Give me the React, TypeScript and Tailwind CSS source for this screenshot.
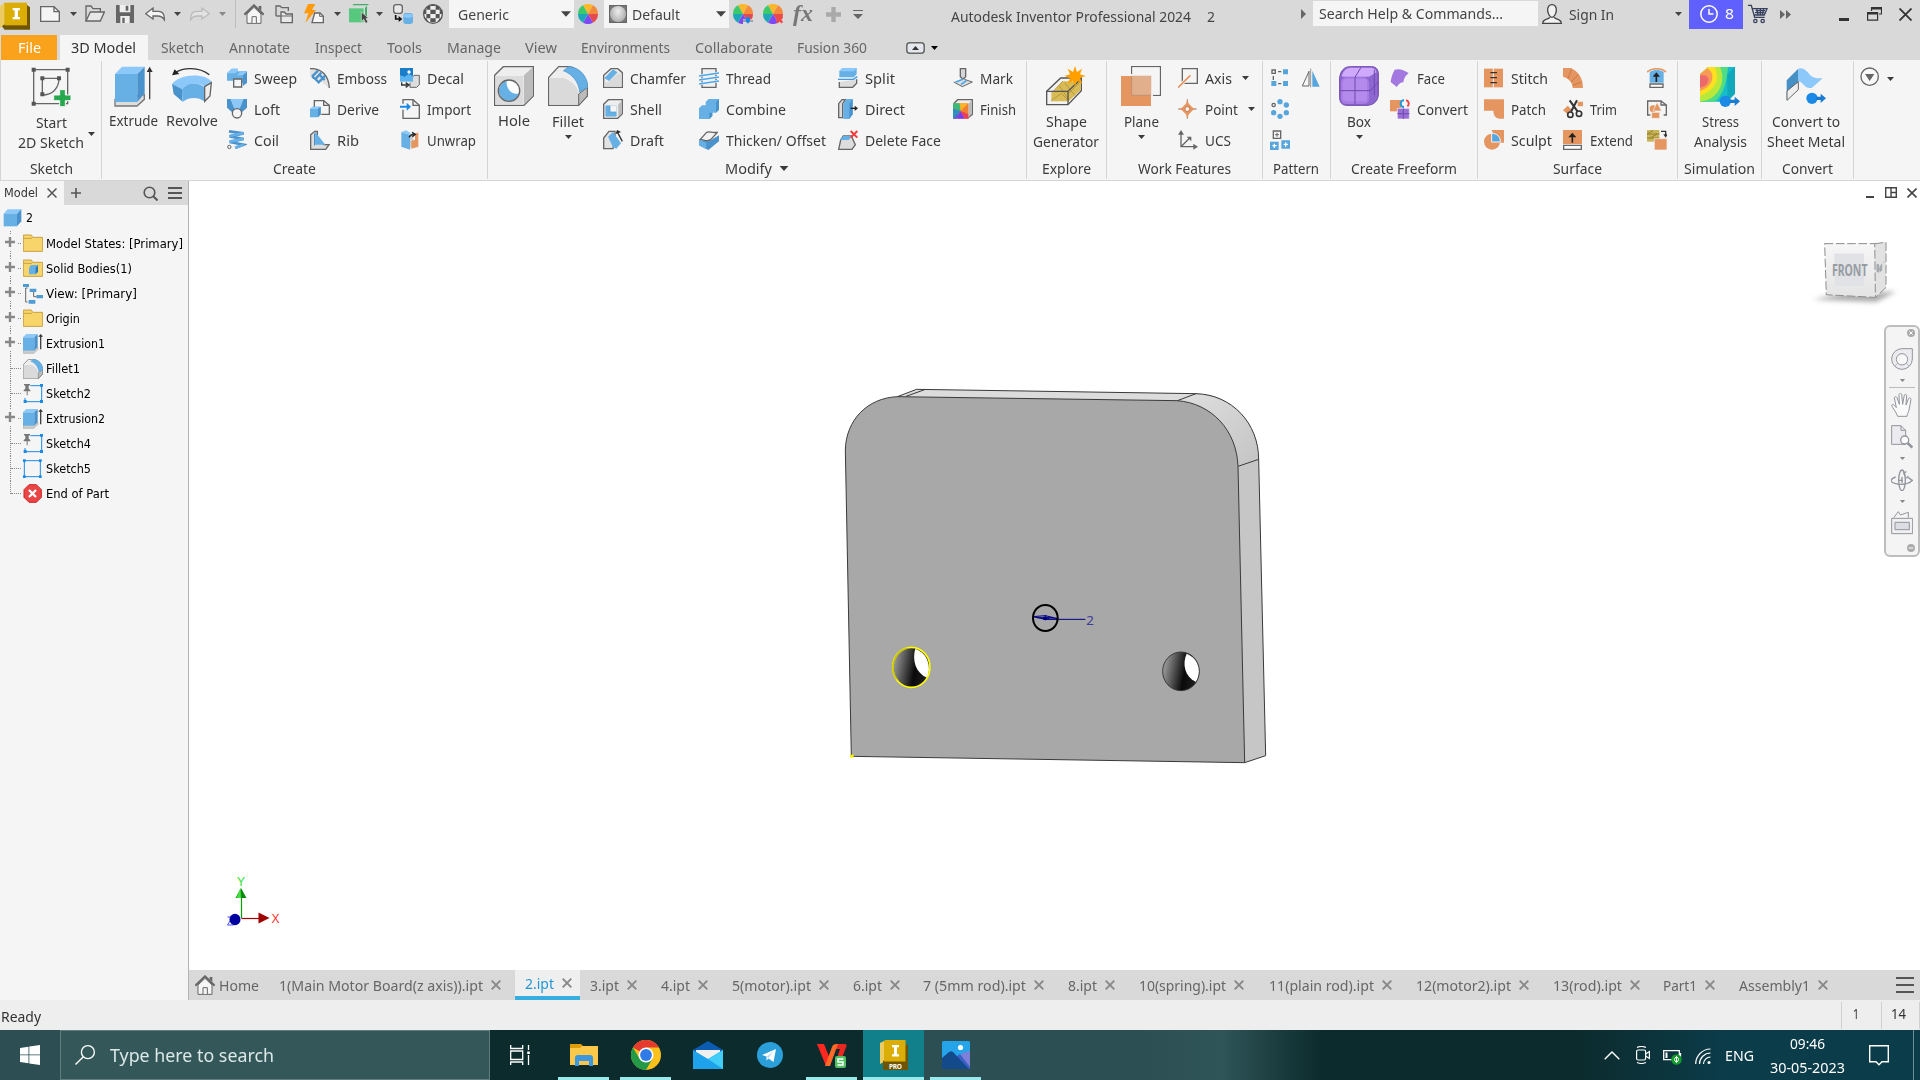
import React, { useLayoutEffect, useRef } from "react";

type Kids = { children?: React.ReactNode };

/* Condenses its text so that it fills the width given by the class. */
function Fit({ className = "", children }: Kids & { className?: string }) {
  const outer = useRef<HTMLSpanElement>(null);
  const inner = useRef<HTMLSpanElement>(null);
  useLayoutEffect(() => {
    const o = outer.current;
    const i = inner.current;
    if (!o || !i) return;
    i.style.transform = "none";
    const k = o.getBoundingClientRect().width / i.getBoundingClientRect().width;
    i.style.transform = `scaleX(${k})`;
  }, [children]);
  return (
    <span ref={outer} className={`block shrink-0 whitespace-nowrap ${className}`}>
      <span ref={inner} className="inline-block origin-left">{children}</span>
    </span>
  );
}

/* Small drawing: 60 units to 20 pixels by default. */
function Ic({ v = "0 0 60 60", className = "h-5 w-5", children }: Kids & { v?: string; className?: string }) {
  return (
    <svg viewBox={v} className={`block shrink-0 ${className}`} fill="none" stroke="none">
      {children}
    </svg>
  );
}

function Down({ className = "" }: { className?: string }) {
  return (
    <svg viewBox="0 0 14 8" className={`block h-1 w-[7px] shrink-0 ${className}`}>
      <path d="M0 0h14L7 8z" fill="currentColor" />
    </svg>
  );
}

const G = "#666";
const B1 = "#8cc8fa";
const B2 = "#66b0e6";
const B3 = "#4a92cc";
const OR = "#e59560";

function Wheel({ mark }: { mark?: "down" | "x" }) {
  return (
    <Ic>
      <path d="M30 30L15 4A30 30 0 0 1 45 4z" fill="#fcb72c" />
      <path d="M30 30L45 4A30 30 0 0 1 60 30z" fill="#f48a3c" />
      <path d="M30 30H60A30 30 0 0 1 45 56z" fill="#e54a50" />
      <path d="M30 30L45 56A30 30 0 0 1 15 56z" fill="#7f48f5" />
      <path d="M30 30L15 56A30 30 0 0 1 0 30z" fill="#1ea7b6" />
      <path d="M30 30H0A30 30 0 0 1 15 4z" fill="#3cc96c" />
      {mark === "down" && (
        <>
          <path d="M30 46h30v14H30z" fill="#d9d9d9" />
          <path d="M30 51h8M52 51h8" stroke={G} strokeWidth="3" />
          <path d="M38 40h13v12l-6 7-7-7z" fill="#1b84e0" />
        </>
      )}
      {mark === "x" && <path d="M41 38l17 18M58 38L41 56" stroke="#f04848" strokeWidth="7" />}
    </Ic>
  );
}

function HomeIcon() {
  return (
    <Ic>
      <path d="M9 30L30 10l21 20v28H9z" fill="#f5f5f5" stroke={G} strokeWidth="3" />
      <path d="M1 32L30 4l29 28" stroke={G} strokeWidth="6" />
      <path d="M44 6h8v14l-8-7z" fill={G} />
      <path d="M24 57V38h13v19" fill="#f5f5f5" stroke={G} strokeWidth="3" />
    </Ic>
  );
}

function TitleBar() {
  return (
    <div className="mb-[2px] flex h-7 items-center text-[#444] [&>*]:shrink-0">
      <Ic v="0 0 93 90" className="h-[30px] w-[31px] self-start">
        <path d="M0 18L14 8v68L0 84z" fill="#ebcb62" />
        <path d="M80 14l10 8v67H14l-8-10z" fill="#6f5500" />
        <path d="M13 8h68v68H13z" fill="#dcae05" />
        <path d="M38 24h22v7h-6v20h6v7H38v-7h6V31h-6z" fill="#fff" />
      </Ic>
      <Ic className="ml-[9px] h-5 w-5">
        <path d="M2 8h40l16 15v29H2z" fill="#f5f5f5" stroke={G} strokeWidth="4" />
        <path d="M42 8v15h16" stroke={G} strokeWidth="4" />
      </Ic>
      <Down className="ml-[10px]" />
      <Ic className="ml-2 h-5 w-5">
        <path d="M3 51V6h15l6 8h22v9" stroke={G} strokeWidth="4" />
        <path d="M16 24h42L46 51H3z" fill="#e8e8e8" stroke={G} strokeWidth="4" />
      </Ic>
      <Ic v="0 0 54 54" className="ml-[11px] h-[18px] w-[18px]">
        <path d="M0 0h54v54H0z" fill={G} />
        <path d="M11 0h32v22H11zM13 33h28v21H13z" fill="#f0f0f0" />
        <path d="M29 2h8v15h-8zM19 38h7v16h-7zM11 27h32v3H11z" fill={G} />
      </Ic>
      <Ic className="ml-[11px] h-5 w-5">
        <path d="M2 29L24 12v10h17c12 0 17 8 17 22v3C52 37 46 36 38 36H24v9z" fill="#f5f5f5" stroke={G} strokeWidth="4" />
      </Ic>
      <Down className="ml-[9px]" />
      <Ic className="ml-[9px] h-5 w-5">
        <path d="M58 29L36 12v10H19C7 22 2 30 2 44v3c6-10 12-11 20-11h14v9z" fill="#e3e3e3" stroke="#bbb" strokeWidth="4" />
      </Ic>
      <Down className="ml-[9px] text-[#888]" />
      <div className="ml-[9px] h-7 w-px self-start bg-[#bdbdbd]" />
      <div className="ml-2"><HomeIcon /></div>
      <Ic v="0 0 54 60" className="ml-[11px] h-5 w-[18px]">
        <path d="M3 36V6h12l5 5h20v10" stroke={G} strokeWidth="4" />
        <path d="M3 36h14" stroke={G} strokeWidth="4" />
        <path d="M18 56V24h10l5 6h19v26z" fill="#e8e8e8" stroke={G} strokeWidth="4" />
        <path d="M18 36h34" stroke={G} strokeWidth="3" />
      </Ic>
      <Ic className="ml-[11px] h-5 w-5">
        <path d="M12 0h22L24 18h12L4 56l9-28H0z" fill="#ff9a0a" />
        <path d="M24 56l8-29h16l10 10v19z" fill="#f5f5f5" stroke={G} strokeWidth="4" />
        <path d="M47 27v10h11" stroke={G} strokeWidth="3" />
      </Ic>
      <Down className="ml-[10px]" />
      <Ic className="ml-2 h-5 w-5">
        <path d="M14 0h46l-4 4H10zM54 5v38l-6 6V12z" fill="#3fae68" />
        <path d="M0 13h44v42H0z" fill="#57c97f" />
        <path d="M37 24v28l7-6 6 12 7-3-6-12h8z" fill="#444" stroke="#ddd" strokeWidth="2" />
      </Ic>
      <Down className="ml-[7px]" />
      <Ic className="ml-[10px] h-5 w-5">
        <rect x="2" y="2" width="26" height="26" rx="8" fill="#e8e8e8" stroke={G} strokeWidth="4" />
        <rect x="31" y="27" width="29" height="33" rx="8" fill={B2} />
        <path d="M31 35c0-8 29-8 29 0s-29 8-29 0" fill={B1} />
        <path d="M8 33v12h12" stroke="#111" strokeWidth="5" />
        <path d="M17 36l11 9-11 9z" fill="#111" />
      </Ic>
      <Ic className="ml-[10px] h-5 w-5">
        <circle cx="30" cy="30" r="28" fill="#eee" stroke="#555" strokeWidth="4" />
        <path d="M12 6h10v11H10zM38 6h10l3 11H38zM22 17h16v13H22zM2 17h8v13H1zM50 17h8l1 13h-9zM10 30h12v13H10zM38 30h12v13H38zM22 43h16v12H22zM4 43h6l6 10h-4zM50 43h6l-8 10h-4zM24 2h12v4H24z" fill="#555" />
      </Ic>
      <div className="ml-[6px] flex h-7 w-[125px] items-center self-start bg-[#f5f5f5]">
        <Fit className="ml-[9px] w-[51px]">Generic</Fit>
        <Down className="ml-[52px] h-[6px] w-[10px]" />
      </div>
      <div className="ml-1"><Wheel /></div>
      <div className="ml-[6px] flex h-7 w-[125px] items-center self-start bg-[#f5f5f5]">
        <div className="ml-[5px] h-[18px] w-[18px] border border-[#666] bg-[#777]">
          <div className="h-4 w-4 rounded-full bg-radial-[at_50%_35%] from-[#eee] to-[#999]" />
        </div>
        <Fit className="ml-[5px] w-12">Default</Fit>
        <Down className="ml-[36px] h-[6px] w-[10px]" />
      </div>
      <div className="ml-1"><Wheel mark="down" /></div>
      <div className="ml-[10px]"><Wheel mark="x" /></div>
      <div className="ml-[10px] w-5 text-center font-['Liberation_Serif',serif] text-[23px] leading-5 font-bold text-[#777] italic">
        <Fit className="w-5">fx</Fit>
      </div>
      <Ic v="0 0 45 45" className="ml-[13px] h-[15px] w-[15px]">
        <path d="M16 0h13v16h16v13H29v16H16V29H0V16h16z" fill="#aaa" />
      </Ic>
      <Ic v="0 0 30 27" className="ml-3 h-[9px] w-[10px]">
        <path d="M0 0h30v3H0zM0 12h30L15 27z" fill={G} />
      </Ic>
      <Fit className="mt-[3px] ml-[88px] w-[240px]">Autodesk Inventor Professional 2024</Fit>
      <Fit className="mt-[3px] ml-4 w-2">2</Fit>
      <Ic v="0 0 5 10" className="ml-[86px] h-[10px] w-[5px]">
        <path d="M0 0l5 5-5 5z" fill={G} />
      </Ic>
      <div className="mt-px ml-[7px] flex h-[25px] w-[225px] items-center self-start bg-[#f5f5f5] pb-[2px]">
        <Fit className="ml-[6px] w-[184px]">Search Help &amp; Commands...</Fit>
      </div>
      <Ic className="ml-1 h-5 w-5">
        <path d="M24 40c-2 6-22 4-22 18h56c0-14-20-12-22-18" fill="#f2f2f2" stroke="#444" strokeWidth="4" />
        <path d="M30 2c-9 0-14 8-13 18s7 20 13 20 12-10 13-20S39 2 30 2z" fill="#f2f2f2" stroke="#444" strokeWidth="4" />
      </Ic>
      <Fit className="ml-[7px] w-[45px]">Sign In</Fit>
      <Down className="ml-[61px]" />
      <div className="ml-[7px] flex h-[29px] w-[54px] items-center self-start bg-[#6060ff] pb-px text-white">
        <svg viewBox="0 0 18 18" className="ml-[11px] h-[18px] w-[18px]" fill="none" stroke="#fff" strokeWidth="1.500">
          <circle cx="9" cy="9" r="8.2" />
          <path d="M9 4v5h4.500" />
        </svg>
        <Fit className="ml-[7px] w-[9px] text-[14px]">8</Fit>
      </div>
      <Ic className="ml-[5px] h-5 w-5">
        <path d="M0 4h10l10 36h30M13 14h44l-8 19H19M23 20h28M21 26h28M26 14l4 19M37 14v19M47 14l-4 19" stroke="#36405e" strokeWidth="4" />
        <circle cx="22" cy="51" r="5" stroke="#36405e" strokeWidth="4" />
        <circle cx="44" cy="51" r="5" stroke="#36405e" strokeWidth="4" />
      </Ic>
      <Ic v="0 0 11 9" className="ml-3 h-[9px] w-[11px]">
        <path d="M0 0l5 4.500-5 4.500zM6 0l5 4.500-5 4.500z" fill={G} />
      </Ic>
      <div className="mt-[11px] ml-[48px] h-[3px] w-[10px] bg-[#333]" />
      <Ic v="0 0 15 14" className="ml-[18px] h-[14px] w-[15px]">
        <path d="M4.500 4V1h10v6H12" stroke="#333" strokeWidth="1.200" />
        <path d="M4 0h11v2.500H4zM0 5h11v2.500H0z" fill="#333" />
        <path d="M.6 5.600h10v7.500H.6z" stroke="#333" strokeWidth="1.200" />
      </Ic>
      <Ic v="0 0 13 13" className="mt-px ml-[17px] h-[13px] w-[13px]">
        <path d="M.5.5l12 12M12.500.5l-12 12" stroke="#333" strokeWidth="1.800" />
      </Ic>
    </div>
  );
}

function MenuTabs() {
  return (
    <div className="mt-[5px] flex h-[25px] items-center text-[#666] [&>span]:-mt-[2px]">
      <div className="ml-px flex h-full w-14 items-center bg-[#faa21b] pb-[2px] text-white">
        <Fit className="ml-[17px] w-[23px]">File</Fit>
      </div>
      <div className="ml-[3px] flex h-full w-[88px] items-center bg-[#f5f5f5] pb-[2px] text-[#333]">
        <Fit className="ml-[11px] w-[65px]">3D Model</Fit>
      </div>
      <Fit className="ml-[13px] w-[43px]">Sketch</Fit>
      <Fit className="ml-[25px] w-[61px]">Annotate</Fit>
      <Fit className="ml-[25px] w-[47px]">Inspect</Fit>
      <Fit className="ml-[25px] w-[35px]">Tools</Fit>
      <Fit className="ml-[25px] w-[54px]">Manage</Fit>
      <Fit className="ml-[24px] w-[32px]">View</Fit>
      <Fit className="ml-[24px] w-[89px]">Environments</Fit>
      <Fit className="ml-[25px] w-[78px]">Collaborate</Fit>
      <Fit className="ml-[24px] w-[70px]">Fusion 360</Fit>
      <Ic v="0 0 19 12" className="ml-[39px] h-3 w-[19px]">
        <rect x=".8" y=".8" width="17.400" height="10.400" rx="3" fill="#e4e8ec" stroke="#666" strokeWidth="1.500" />
        <path d="M6 8l3.500-4L13 8z" fill="#333" />
      </Ic>
      <Down className="ml-[6px] text-black" />
    </div>
  );
}

function Panel({ width, title, children }: Kids & { width: string; title?: React.ReactNode }) {
  return (
    <section className={`mt-px flex h-[118px] shrink-0 flex-col border-r border-[#d4d4d4] ${width}`}>
      <div className="-mt-px flex h-[98px] items-start">{children}</div>
      <div className="flex h-5 items-center justify-center">{title}</div>
    </section>
  );
}

function Big({ width, icon, children }: Kids & { width: string; icon: React.ReactNode }) {
  return (
    <div className={`flex shrink-0 flex-col items-center ${width}`}>
      <div className="flex h-[50px] items-start pt-[6px]">{icon}</div>
      {children}
    </div>
  );
}

function Col({ className = "", children }: Kids & { className?: string }) {
  return <div className={`mt-[2px] flex shrink-0 flex-col ${className}`}>{children}</div>;
}

function Item({ icon, w, arrow, children }: Kids & { icon: React.ReactNode; w?: string; arrow?: string }) {
  return (
    <div className="flex h-[31px] items-center">
      {icon}
      {w && <Fit className={`ml-[7px] ${w}`}>{children}</Fit>}
      {arrow && <Down className={arrow} />}
    </div>
  );
}

function Extrude({ className = "h-[42px] w-10" }: { className?: string }) {
  return (
    <Ic v="0 0 120 126" className={className}>
      <path d="M3 100v20h66l22-20V86z" fill="#ddd" stroke="#777" strokeWidth="4" />
      <path d="M3 24L24 2h68L70 24z" fill={B1} />
      <path d="M3 24h67v84H3z" fill={B2} />
      <path d="M70 24L92 2v80l-22 26z" fill={B3} />
      <path d="M107 100V10" stroke="#444" strokeWidth="4" />
      <path d="M98 18l9-16 9 16z" fill="#333" />
    </Ic>
  );
}

function Fillet({ className = "h-10 w-10" }: { className?: string }) {
  return (
    <Ic v="0 0 120 120" className={className}>
      <path d="M2 34L32 2h30c30 4 56 34 56 66v22L92 118H2z" fill="#eee" stroke={G} strokeWidth="4" />
      <path d="M4 36h43c24 8 44 28 45 50v30H4z" fill="#dadada" />
      <path d="M92 84l26-20v26l-26 28z" fill="#bbb" stroke={G} strokeWidth="3" />
      <path d="M46 14L62 2c32 2 56 26 58 62L95 78C92 46 72 24 46 14z" fill={B2} stroke={B3} strokeWidth="2" />
    </Ic>
  );
}

function RibbonCreate() {
  return (
    <Panel width="w-[386px]" title={<Fit className="w-[43px]">Create</Fit>}>
      <Big width="w-[63px]" icon={<Extrude className="h-[42px] w-10" />}>
        <Fit className="w-[49px]">Extrude</Fit>
      </Big>
      <Big
        width="w-[54px]"
        icon={
          <Ic v="0 0 120 120" className="h-10 w-10">
            <path d="M10 20C34 4 80 2 112 26" stroke="#333" strokeWidth="4" />
            <path d="M0 28L8 10l14 14z" fill="#222" />
            <path d="M0 54C20 24 98 18 120 48L97 62C80 48 44 48 30 72z" fill={B1} />
            <path d="M0 54l30 16v36L5 84z" fill={B3} />
            <path d="M30 72c14-24 50-24 67-8v42c-20-16-50-12-66 2z" fill={B2} />
            <path d="M98 62l20-12-4 40-16 16z" fill="#eee" stroke={G} strokeWidth="4" />
          </Ic>
        }
      >
        <Fit className="w-[52px]">Revolve</Fit>
      </Big>
      <Col className="ml-2 w-[83px]">
        <Item w="w-[43px]" icon={
          <Ic>
            <path d="M0 16L14 2h18v8h28v36H32V38H0z" fill={B2} />
            <path d="M0 16L14 2h18v8l-8 6zM30 22l10-11h20l-8 11z" fill={B1} />
            <path d="M48 22L60 11v33L48 54z" fill={B3} />
            <path d="M20 33h24v24H20z" fill="#f5f5f5" stroke={G} strokeWidth="4" />
          </Ic>
        }>Sweep</Item>
        <Item w="w-[26px]" icon={
          <Ic>
            <path d="M0 0h60v26L42 42H18L0 26z" fill={B3} />
            <path d="M10 0h40L38 30H22z" fill={B1} />
            <circle cx="30" cy="43" r="14" fill="#f5f5f5" stroke={G} strokeWidth="4" />
          </Ic>
        }>Loft</Item>
        <Item w="w-[25px]" icon={
          <Ic>
            <path d="M6 4l44 6-42 9 42 8-42 9 42 8-24 9" stroke={B3} strokeWidth="8" />
            <path d="M50 9L8 18M50 26L8 35M50 44l-26 9" stroke={B2} strokeWidth="8" />
            <circle cx="7" cy="51" r="5" fill="#f5f5f5" stroke={G} strokeWidth="3" />
          </Ic>
        }>Coil</Item>
      </Col>
      <Col className="w-[90px]">
        <Item w="w-[50px]" icon={
          <Ic>
            <path d="M0 2c34-2 56 20 58 58L30 38 0 24z" fill="#e2e2e2" />
            <path d="M0 2c34-2 56 20 58 58" stroke={G} strokeWidth="4" />
            <path d="M6 26L24 8M6 26l10 7L34 14M16 33l10 10 20-20M26 18l18 18" stroke={B3} strokeWidth="7" />
          </Ic>
        }>Emboss</Item>
        <Item w="w-[42px]" icon={
          <Ic>
            <path d="M13 24V5h28l17 14v27H34" fill="#f5f5f5" stroke={G} strokeWidth="4" />
            <path d="M41 5v14h17" stroke={G} strokeWidth="4" />
            <path d="M0 30l8-7h24v23l-8 9H0z" fill={B2} />
            <path d="M0 30l8-7h24l-8 7z" fill={B1} />
            <path d="M24 30l8-7v23l-8 9z" fill={B3} />
          </Ic>
        }>Derive</Item>
        <Item w="w-[22px]" icon={
          <Ic>
            <path d="M2 14L14 4h8v24l20 16h15l-10 14H2z" fill="#ddd" stroke={G} strokeWidth="4" />
            <path d="M16 6l30 38H16z" fill={B2} />
            <path d="M16 6v38l-4 4V12z" fill={B3} />
          </Ic>
        }>Rib</Item>
      </Col>
      <Col>
        <Item w="w-[37px]" icon={
          <Ic>
            <path d="M36 30l6-8h16v28l-8 8H30V44" fill="#ddd" stroke={G} strokeWidth="3" />
            <path d="M0 0h39v40H0z" fill="#1b7cc8" />
            <path d="M0 22l14 4 12-8 13 6v16H0z" fill="#5ab4f0" />
            <circle cx="27" cy="12" r="5" fill="#fff" />
            <path d="M5 43v8h18M17 44l10 7-10 7" stroke="#333" strokeWidth="4" />
          </Ic>
        }>Decal</Item>
        <Item w="w-[44px]" icon={
          <Ic>
            <path d="M9 14V2h30l19 17v39H9V32" fill="#f5f5f5" stroke={G} strokeWidth="4" />
            <path d="M39 2v17h19" stroke={G} strokeWidth="4" />
            <path d="M0 20h20v-9l13 12-13 12v-9H0z" fill="#1b8ae6" />
          </Ic>
        }>Import</Item>
        <Item w="w-[49px]" icon={
          <Ic>
            <path d="M4 6l26 8v45L4 50z" fill={B2} />
            <path d="M4 6l14-5 14 8-2 5z" fill={B1} />
            <path d="M30 14l10-5v20L30 59z" fill="#ccc" />
            <path d="M34 56V34l8-4h3V12l10-5v43z" fill={OR} />
            <path d="M27 22c4-8 8-9 14-9M36 7l10 6-9 7" stroke="#222" strokeWidth="4" />
          </Ic>
        }>Unwrap</Item>
      </Col>
    </Panel>
  );
}

function RibbonModify() {
  return (
    <Panel
      width="w-[539px]"
      title={<><Fit className="w-[47px]">Modify</Fit><Down className="ml-[7px] h-[5px] w-[10px]" /></>}
    >
      <Big width="w-[52px]" icon={
        <Ic v="0 0 120 120" className="h-10 w-10">
          <path d="M2 28L28 2h90v88l-28 28H2z" fill="#eee" stroke={G} strokeWidth="4" />
          <path d="M4 30h84v86H4z" fill="#dcdcdc" />
          <path d="M90 28l26-24v86l-26 26z" fill="#bcbcbc" />
          <circle cx="45" cy="74" r="31" fill="#fff" />
          <path d="M38 44a31 31 0 1 0 38 38C54 90 34 66 38 44z" fill={B2} />
          <circle cx="45" cy="74" r="32" stroke={G} strokeWidth="4" />
        </Ic>
      }>
        <Fit className="w-[32px]">Hole</Fit>
      </Big>
      <Big width="w-[56px]" icon={<Fillet />}>
        <Fit className="mt-px w-[32px]">Fillet</Fit>
        <Down className="mt-1" />
      </Big>
      <Col className="ml-[7px] w-[96px]">
        <Item w="w-[56px]" icon={
          <Ic>
            <path d="M2 36V22L24 2h20l14 12v44H2z" fill="#eee" stroke={G} strokeWidth="4" />
            <path d="M4 40l10 4 26-24 16-6v42H4z" fill="#dadada" />
            <path d="M4 30L30 4l14 9-26 26z" fill={B2} />
          </Ic>
        }>Chamfer</Item>
        <Item w="w-[32px]" icon={
          <Ic>
            <path d="M2 16L16 2h42v42L44 58H2z" fill="#eee" stroke={G} strokeWidth="4" />
            <path d="M46 16L56 6v36L46 54z" fill="#bbb" />
            <path d="M8 20h32v32H8z" fill={B3} />
            <path d="M22 20h18v18H22z" fill="#f5f5f5" />
            <path d="M8 20v32l12-12V20zM20 40h20v12H8z" fill={B2} />
          </Ic>
        }>Shell</Item>
        <Item w="w-[34px]" icon={
          <Ic>
            <path d="M2 24L18 4h18v18L30 56H2z" fill="#e2e2e2" stroke={G} strokeWidth="4" />
            <path d="M15 20L30 6l24 34-14 16-10-4z" fill={B2} />
            <path d="M58 34L44 8" stroke="#333" strokeWidth="4" />
            <path d="M38 12l4-12 12 6z" fill="#222" />
          </Ic>
        }>Draft</Item>
      </Col>
      <Col className="w-[139px]">
        <Item w="w-[45px]" icon={
          <Ic>
            <path d="M9 2h42v56H9z" fill="#f0f0f0" stroke={G} strokeWidth="4" />
            <path d="M0 24l60-9M0 36l60-9M0 48l60-9" stroke="#f5f5f5" strokeWidth="8" />
            <path d="M0 24l60-9M0 36l60-9M0 48l60-9" stroke="#4aa6ec" strokeWidth="4" />
          </Ic>
        }>Thread</Item>
        <Item w="w-[60px]" icon={
          <Ic>
            <path d="M0 28l9-9h11V9l9-9h31v32l-9 9H40v10l-9 9H0z" fill={B2} />
            <path d="M60 0v32l-9 9V10zM40 41v10l-9 9V41z" fill={B3} />
          </Ic>
        }>Combine</Item>
        <Item w="w-[100px]" icon={
          <Ic>
            <path d="M0 30L30 34 60 16v18L28 60 0 46z" fill={B3} />
            <path d="M0 30l22 8v20L0 46z" fill={B2} />
            <path d="M4 28L22 8c8-8 18 4 34-2L36 28C26 38 14 28 4 28z" fill="#f2f2f2" stroke={G} strokeWidth="4" />
          </Ic>
        }>Thicken/ Offset</Item>
      </Col>
      <Col className="w-[115px]">
        <Item w="w-[30px]" icon={
          <Ic>
            <path d="M4 10l9-10h43v18l-8 10H4z" fill={B2} />
            <path d="M4 10l9-10h43l-8 10z" fill={B1} />
            <path d="M4 42v16h40l12-12V34" fill="#ddd" stroke={G} strokeWidth="4" />
            <path d="M0 34h46l12-8" stroke="#3f9ce4" strokeWidth="4" />
          </Ic>
        }>Split</Item>
        <Item w="w-[40px]" icon={
          <Ic>
            <path d="M2 56V14L12 2h10L14 14v42z" fill="#ddd" stroke={G} strokeWidth="4" />
            <path d="M16 14L26 0h18v46L34 60H16z" fill={B2} />
            <path d="M34 14L44 0v46L34 60z" fill={B3} />
            <path d="M38 28h14" stroke="#222" strokeWidth="4" />
            <path d="M50 20l10 8-10 8z" fill="#222" />
          </Ic>
        }>Direct</Item>
        <Item w="w-[76px]" icon={
          <Ic>
            <path d="M2 58l6-28 8-12h24l12 26-10 14z" fill="#ddd" stroke={G} strokeWidth="4" />
            <path d="M6 30l10-12h26L32 30z" fill={B2} />
            <path d="M38 3l20 20M58 3L38 23" stroke="#f03c3c" strokeWidth="6" />
          </Ic>
        }>Delete Face</Item>
      </Col>
      <Col>
        <Item w="w-[33px]" icon={
          <Ic>
            <path d="M22 2h16v24l-8 8-8-8z" fill="#d5d5d5" stroke={G} strokeWidth="4" />
            <path d="M2 42l26 14 30-14-24-8" fill="#ddd" stroke={G} strokeWidth="3" />
            <path d="M8 42l22-8M24 50l16-12" stroke="#46a4ea" strokeWidth="5" />
          </Ic>
        }>Mark</Item>
        <Item w="w-[36px]" icon={
          <Ic>
            <path d="M2 14L14 2h44v44L46 56z" fill="#eee" stroke={G} strokeWidth="4" />
            <path d="M46 14L56 4v40L46 56z" fill="#bbb" />
            <path d="M0 13h46v46H0z" fill="#f08030" />
            <path d="M0 13h20l3 23L0 28z" fill="#3cb878" />
            <path d="M20 13h26L23 36z" fill="#fbb32a" />
            <path d="M0 28l23 8L0 59z" fill="#2a90c0" />
            <path d="M23 36L12 59H0z" fill="#4a60e0" />
            <path d="M23 36l12 23H12z" fill="#7a3cf0" />
            <path d="M23 36l23 10v13H35z" fill="#e8405a" />
          </Ic>
        }>Finish</Item>
      </Col>
    </Panel>
  );
}

function RibbonRest() {
  return (
    <>
      <Panel width="w-[80px]" title={<Fit className="-ml-px w-[49px]">Explore</Fit>}>
        <Big width="w-[78px]" icon={
          <Ic v="0 0 120 120" className="h-10 w-10">
            <path d="M2 76L44 36h62v38l-40 42H2z" fill="#f2f2f2" stroke="#555" strokeWidth="4" />
            <path d="M16 84l34-38h54v26l-36 34H16z" fill="#d9bb55" />
            <path d="M16 82l34-36M68 82l34-34M40 60l28 40M16 104l30-22 22 22M56 50l30 38" stroke="#b89a40" strokeWidth="3" />
            <path d="M2 76h64v40M66 76l38-36" stroke="#555" strokeWidth="4" />
            <path d="M87 0l6 18 15-10-6 17 17 5-17 6 7 17-16-9-6 16-6-16-16 9 7-17-17-6 17-5-7-17 16 10z" fill="#ffa000" />
          </Ic>
        }>
          <Fit className="mt-px w-[41px] leading-5">Shape</Fit>
          <Fit className="w-[66px] leading-5">Generator</Fit>
        </Big>
      </Panel>
      <Panel width="w-[156px]" title={<Fit className="w-[93px]">Work Features</Fit>}>
        <Big width="w-[68px]" icon={
          <Ic v="0 0 120 120" className="h-10 w-10">
            <path d="M0 30h90v90H0z" fill={OR} />
            <path d="M32 2h86v86H32z" fill="#dfc4b0" fillOpacity=".55" />
            <path d="M32 24V2h86v86H96" stroke={G} strokeWidth="4" />
            <path d="M32 30v58h58" stroke="#b58a70" strokeWidth="2" />
            <path d="M92 4h24v82H92zM34 4h60v24H34z" fill="#f5f5f5" />
          </Ic>
        }>
          <Fit className="mt-px w-[35px]">Plane</Fit>
          <Down className="mt-1" />
        </Big>
        <Col className="ml-[3px]">
          <Item w="w-[27px]" arrow="ml-[10px]" icon={
            <Ic>
              <path d="M13 2h45v44H13z" stroke={G} strokeWidth="4" />
              <path d="M0 59l37-37" stroke="#f5f5f5" strokeWidth="10" />
              <path d="M0 59l37-37" stroke={OR} strokeWidth="5" />
            </Ic>
          }>Axis</Item>
          <Item w="w-[33px]" arrow="ml-[10px]" icon={
            <Ic>
              <path d="M28 0v60M0 30h56" stroke={G} strokeWidth="2" />
              <path d="M28 10l20 20-20 20L8 30z" fill={OR} />
              <path d="M28 0l4 14h-8zM28 60l4-14h-8zM0 30l14-4v8zM56 30l-14-4v8z" fill={OR} />
              <circle cx="28" cy="30" r="7" fill="#f5f5f5" stroke="#b86b3a" strokeWidth="2" />
            </Ic>
          }>Point</Item>
          <Item w="w-[26px]" icon={
            <Ic>
              <path d="M9 8v42h42M9 50l26-26" stroke={G} strokeWidth="4" />
              <path d="M0 14L9 0l9 14zM46 41l14 9-14 9zM26 20h14v14z" fill={G} />
            </Ic>
          }>UCS</Item>
        </Col>
      </Panel>
      <Panel width="w-[68px]" title={<Fit className="-ml-px w-[46px]">Pattern</Fit>}>
        <Col className="ml-[7px] w-[31px]">
          <Item icon={
            <Ic>
              <path d="M6 6h10v10H6z" stroke={G} strokeWidth="4" />
              <path d="M24 11h10M24 47h10M10 24v12" stroke={G} strokeWidth="4" />
              <path d="M39 4h15v15H39zM4 39h15v15H4zM39 39h15v15H39z" fill="#56a6dd" />
            </Ic>
          } />
          <Item icon={
            <Ic>
              <circle cx="11" cy="18" r="5" stroke={G} strokeWidth="4" />
              <g fill="#56a6dd">
                <circle cx="30" cy="8" r="8" /><circle cx="49" cy="18" r="8" /><circle cx="49" cy="41" r="8" />
                <circle cx="30" cy="52" r="8" /><circle cx="11" cy="41" r="8" />
              </g>
            </Ic>
          } />
          <Item icon={
            <Ic>
              <path d="M10 3h22v22H10z" stroke={G} strokeWidth="4" />
              <path d="M0 35h26v25H0zM34 31h26v25H34z" fill="#56a6dd" />
              <path d="M21 8v12M15 14h12" stroke={G} strokeWidth="3" />
              <path d="M13 41v13M7 47h13M47 37v13M41 43h13" stroke="#fff" strokeWidth="4" />
            </Ic>
          } />
        </Col>
        <Col>
          <Item icon={
            <Ic>
              <path d="M4 54L24 10v44z" stroke={G} strokeWidth="3" />
              <path d="M34 8l22 48H34z" fill="#56a6dd" />
              <path d="M29 2v56" stroke={G} strokeWidth="2" />
            </Ic>
          } />
        </Col>
      </Panel>
      <Panel width="w-[147px]" title={<Fit className="w-[106px]">Create Freeform</Fit>}>
        <Big width="w-[56px]" icon={
          <Ic v="0 0 120 120" className="h-10 w-10">
            <path d="M2 36C4 14 16 2 34 2h64c14 0 20 10 20 22v60c0 20-14 34-34 34H24C8 118 2 108 2 94z" fill="#8e66cf" stroke="#6a45a8" strokeWidth="3" />
            <path d="M8 30C14 12 24 5 36 5h58c10 0 18 8 18 14L90 32H12z" fill="#cfa9fb" />
            <rect x="6" y="34" width="84" height="80" rx="16" fill="#a97ce4" />
            <rect x="12" y="38" width="72" height="68" rx="10" fill="#b48aec" />
            <path d="M4 74h90l24-26M48 34v82M48 34L66 4M106 12v76" stroke="#6f4aad" strokeWidth="3" />
          </Ic>
        }>
          <Fit className="mt-px w-[24px]">Box</Fit>
          <Down className="mt-1" />
        </Big>
        <Col className="ml-[3px]">
          <Item w="w-[28px]" icon={
            <Ic>
              <path d="M14 5c14-4 26 0 42 10-14 12-14 20-16 28-8 0-12 4-20 14L2 42C4 26 8 16 14 5z" fill="#a378e0" />
            </Ic>
          }>Face</Item>
          <Item w="w-[51px]" icon={
            <Ic>
              <path d="M0 3h34v34H0z" fill={OR} />
              <path d="M22 28h36v32H22z" fill="#9a6fd8" stroke="#f5f5f5" strokeWidth="2" />
              <path d="M40 28v32M22 44h36" stroke="#6f4aad" strokeWidth="3" />
              <circle cx="46" cy="14" r="13" fill="#f5f5f5" />
              <path d="M48 4a10 10 0 0 1 4 18" stroke="#f04848" strokeWidth="6" />
              <path d="M42 4a10 10 0 0 0 0 20" stroke="#1b9ae6" strokeWidth="6" />
            </Ic>
          }>Convert</Item>
        </Col>
      </Panel>
      <Panel width="w-[200px]" title={<Fit className="w-[49px]">Surface</Fit>}>
        <Col className="ml-[6px] w-[79px]">
          <Item w="w-[37px]" icon={
            <Ic>
              <path d="M0 2h57v56H0z" fill={OR} />
              <path d="M28 2v56" stroke="#f5f5f5" strokeWidth="3" />
              <path d="M19 14h20M19 29h20M19 44h20" stroke="#333" strokeWidth="4" />
            </Ic>
          }>Stitch</Item>
          <Item w="w-[35px]" icon={
            <Ic><path d="M0 1h60v58H47C34 58 28 48 28 35H0z" fill={OR} /></Ic>
          }>Patch</Item>
          <Item w="w-[41px]" icon={
            <Ic>
              <path d="M23 0h37v38H38z" fill={OR} />
              <circle cx="24" cy="35" r="24" fill={OR} />
              <path d="M23 10v26h26C50 20 38 10 23 10z" fill="#56a6e0" stroke="#f5f5f5" strokeWidth="3" />
            </Ic>
          }>Sculpt</Item>
        </Col>
        <Col className="w-[84px]">
          <Item icon={
            <Ic>
              <path d="M0 0h22c22 8 38 28 38 60H29C30 46 18 30 0 26z" fill={OR} />
              <path d="M15 32L26 2M24 42l22-22M29 52l27-10" stroke="#b86b3a" strokeWidth="2" />
            </Ic>
          } />
          <Item w="w-[27px]" icon={
            <Ic>
              <path d="M0 34L14 20l12 12-12 14zM44 8h16v14H44z" fill={OR} />
              <path d="M20 4l24 34M42 4L24 38" stroke="#333" strokeWidth="6" />
              <circle cx="22" cy="47" r="8" stroke="#333" strokeWidth="5" />
              <circle cx="48" cy="44" r="8" stroke="#333" strokeWidth="5" />
            </Ic>
          }>Trim</Item>
          <Item w="w-[43px]" icon={
            <Ic>
              <path d="M0 0h57v42H0z" fill={OR} />
              <path d="M2 46h53v12H2z" fill="#fff" stroke={G} strokeWidth="4" />
              <path d="M28 38V18" stroke="#222" strokeWidth="5" />
              <path d="M16 22L28 8l12 14z" fill="#222" />
            </Ic>
          }>Extend</Item>
        </Col>
        <Col>
          <Item icon={
            <Ic>
              <path d="M8 12c14-8 28-8 42 0v32H8z" fill={B2} />
              <path d="M0 12C16-1 42-1 57 12" stroke={OR} strokeWidth="5" />
              <path d="M9 48h39v10H9z" fill="#fff" stroke={G} strokeWidth="4" />
              <path d="M28 42V22" stroke="#222" strokeWidth="5" />
              <path d="M17 26l11-13 11 13z" fill="#222" />
            </Ic>
          } />
          <Item icon={
            <Ic>
              <path d="M10 48H2V6h40l16 12v30h-8" stroke={G} strokeWidth="4" />
              <path d="M42 6v12h16" stroke={G} strokeWidth="4" />
              <circle cx="18" cy="29" r="10" fill={OR} />
              <path d="M30 10l14 26H18zM14 40h24v18H14z" fill={OR} stroke="#f5f5f5" strokeWidth="2" />
            </Ic>
          } />
          <Item icon={
            <Ic>
              <path d="M0 0h37v35H0z" fill="#c9b458" />
              <path d="M0 12h37M0 24h37M0 12L18 2M10 24l20-12" stroke="#94802e" strokeWidth="3" />
              <path d="M42 4h14v10" stroke="#333" strokeWidth="4" />
              <path d="M49 13h13l-6 10z" fill="#333" />
              <path d="M22 26h38v34H22z" fill={OR} stroke="#f5f5f5" strokeWidth="2" />
            </Ic>
          } />
        </Col>
      </Panel>
      <Panel width="w-[84px]" title={<Fit className="w-[71px]">Simulation</Fit>}>
        <Big width="w-[84px]" icon={
          <Ic v="0 0 120 120" className="mt-px h-10 w-10">
            <path d="M0 22L24 0h81v80l-24 24H0z" fill="#17bccb" />
            <path d="M0 22L24 0h60c-4 40-10 80-40 104H0z" fill="#4fdc84" />
            <path d="M0 22L24 0h36c18 40 0 84-40 100L0 104z" fill="#b9e83a" />
            <path d="M0 22L24 0h20c18 40 0 70-44 86z" fill="#ffe020" />
            <path d="M0 22L22 4c28 18 16 56-22 68z" fill="#f79a55" />
            <path d="M0 26c34-8 34 30 0 36z" fill="#ee6a6a" />
            <path d="M82 22l23-22v80l-23 24z" fill="#0a9cb0" fillOpacity=".6" />
            <circle cx="76" cy="103" r="17" fill="#1b8ae6" />
            <path d="M90 98h14v-9l16 14-16 14v-9H90z" fill="#1b7cd0" />
          </Ic>
        }>
          <Fit className="mt-px w-[37px] leading-5">Stress</Fit>
          <Fit className="w-[53px] leading-5">Analysis</Fit>
        </Big>
      </Panel>
      <Panel width="w-[92px]" title={<Fit className="w-[51px]">Convert</Fit>}>
        <Big width="w-[88px]" icon={
          <Ic v="0 0 120 120" className="mt-px h-10 w-10">
            <path d="M2 40L36 6v42L2 100z" fill="#4690c6" />
            <path d="M36 6C48-2 64 12 72 24c10 10 22 10 38 10L78 62C54 68 50 40 36 44z" fill={B1} />
            <path d="M3 72l34-28v24L3 100z" fill="#eee" stroke={G} strokeWidth="3" />
            <circle cx="78" cy="94" r="17" fill="#1b8ae6" />
            <path d="M90 89h14v-9l16 14-16 14v-9H90z" fill="#1b7cd0" />
          </Ic>
        }>
          <Fit className="mt-px w-[68px] leading-5">Convert to</Fit>
          <Fit className="w-[78px] leading-5">Sheet Metal</Fit>
        </Big>
      </Panel>
      <div className="flex h-[34px] items-center">
        <Ic className="ml-[6px] h-5 w-5">
          <circle cx="29" cy="29" r="26" fill="#f8f8f8" stroke={G} strokeWidth="4" />
          <path d="M15 21h28L29 42z" fill={G} />
        </Ic>
        <Down className="mt-1 ml-[7px]" />
      </div>
    </>
  );
}

function Ribbon() {
  return (
    <div className="flex h-[121px] border-b border-l border-[#d4d4d4] bg-[#f5f5f5] leading-5 text-[#3b3b3b]">
      <Panel width="w-[101px]" title={<Fit className="w-[43px]">Sketch</Fit>}>
        <div className="flex w-full flex-col items-center">
          <div className="flex h-[50px] pt-[7px]">
            <Ic v="0 0 120 120" className="h-10 w-10">
              <path d="M8 8h102v102H8z" stroke={G} strokeWidth="4" />
              <path d="M34 34h50c0 30-20 50-50 50z" stroke={G} strokeWidth="4" />
              <path d="M2 2h12v12H2zM104 2h12v12h-12zM2 104h12v12H2zM28 28h12v12H28zM78 28h12v12H78zM28 76h12v12H28z" fill="#555" />
              <path d="M86 68h17v16h17v17h-17v18H86v-18H68V84h18z" fill="#26a94e" stroke="#f5f5f5" strokeWidth="3" />
            </Ic>
          </div>
          <Fit className="mt-[2px] w-[31px]">Start</Fit>
          <div className="flex w-full items-center">
            <Fit className="ml-[17px] w-[66px]">2D Sketch</Fit>
            <Down className="-mt-4 ml-1" />
          </div>
        </div>
      </Panel>
      <RibbonCreate />
      <RibbonModify />
      <RibbonRest />
    </div>
  );
}

/* ---------- model browser ---------- */

function Folder({ body }: { body?: boolean }) {
  return (
    <Ic>
      <path d="M1 52V3h24l4 7h30v42z" fill="#f8d56a" stroke="#c9a040" strokeWidth="3" />
      <path d="M1 13h26" stroke="#c9a040" strokeWidth="3" />
      {body && (
        <>
          <path d="M18 26l6-8h21v20l-7 8H18z" fill={B2} />
          <path d="M38 26l7-8v20l-7 8z" fill="#2c78b4" />
        </>
      )}
    </Ic>
  );
}

function SketchIcon({ pin }: { pin?: boolean }) {
  return (
    <Ic>
      <path d={pin ? "M22 5h34v48H6V42" : "M4 5h48v48H4z"} stroke="#1b8ae6" strokeWidth="3" />
      {pin ? (
        <>
          <path d="M51 0h9v8h-9zM51 48h9v9h-9zM2 48h9v9H2z" fill="#1b8ae6" />
          <path d="M3 0h18v3l-4 3v8l5 4v4H2v-4l5-4V6L3 3zM11 20h3v14h-3z" fill="#777" />
        </>
      ) : (
        <path d="M0 1h8v8H0zM48 1h8v8h-8zM0 49h8v8H0zM48 49h8v8h-8z" fill="#1b8ae6" />
      )}
    </Ic>
  );
}

const fillet = <Fillet className="h-5 w-5" />;
const extrude = (
  <Ic>
    <path d="M1 46v12h32l12-12v-6z" fill="#ccc" stroke="#aaa" strokeWidth="2" />
    <path d="M0 10L10 0h34L34 10z" fill={B1} />
    <path d="M0 10h34v40H0z" fill={B2} />
    <path d="M34 10L44 0v38L34 50z" fill={B3} />
    <path d="M53 46V4" stroke="#444" strokeWidth="4" />
    <path d="M46 8l7-8 7 8z" fill="#333" />
  </Ic>
);
const viewIcon = (
  <Ic>
    <path d="M14 12H8v42h6M32 22v16h8" stroke={G} strokeWidth="3" />
    <path d="M0 0h18v9H0zM20 14h20v10H20zM40 33h20v10H40zM17 48h20v11H17z" fill="#4f9bd6" />
  </Ic>
);
const endIcon = (
  <Ic>
    <path d="M18 2h22l15 15v23L40 55H18L3 40V17z" fill="#ea4545" stroke="#c22" strokeWidth="3" />
    <path d="M18 18l21 21M39 18L18 39" stroke="#fff" strokeWidth="7" />
  </Ic>
);

const tree: [string, React.ReactNode, string, boolean][] = [
  ["Model States: [Primary]", <Folder key="a" />, "w-[137px]", true],
  ["Solid Bodies(1)", <Folder key="b" body />, "w-[86px]", true],
  ["View: [Primary]", viewIcon, "w-[91px]", true],
  ["Origin", <Folder key="c" />, "w-[34px]", true],
  ["Extrusion1", extrude, "w-[59px]", true],
  ["Fillet1", fillet, "w-[34px]", false],
  ["Sketch2", <SketchIcon key="d" pin />, "w-[45px]", false],
  ["Extrusion2", extrude, "w-[59px]", true],
  ["Sketch4", <SketchIcon key="e" pin />, "w-[45px]", false],
  ["Sketch5", <SketchIcon key="f" />, "w-[45px]", false],
  ["End of Part", endIcon, "w-[63px]", false],
];

function Browser() {
  return (
    <aside className="flex h-full w-[189px] shrink-0 flex-col border-r border-[#b4b4b4] bg-[#f5f5f5] font-['DejaVu_Sans',sans-serif] text-[12.500px] text-black">
      <div className="flex h-6 items-center bg-[#d9d9d9]">
        <div className="flex h-full w-16 items-center bg-[#f5f5f5] text-[#333]">
          <Fit className="ml-1 w-[34px]">Model</Fit>
          <Ic v="0 0 10 10" className="ml-[9px] h-[10px] w-[10px]">
            <path d="M.5.5l9 9M9.500.5l-9 9" stroke="#555" strokeWidth="1.500" />
          </Ic>
        </div>
        <Ic v="0 0 10 10" className="ml-[7px] h-[10px] w-[10px]">
          <path d="M5 0v10M0 5h10" stroke="#555" strokeWidth="1.600" />
        </Ic>
        <Ic v="0 0 15 15" className="ml-[62px] h-[15px] w-[15px]">
          <circle cx="6.500" cy="6.500" r="5.300" stroke="#555" strokeWidth="1.600" />
          <path d="M10.500 10.500l4 4" stroke="#555" strokeWidth="2" />
        </Ic>
        <div className="ml-[10px] flex w-[14px] flex-col gap-[3px] [&>*]:h-[2px] [&>*]:bg-[#555]">
          <div /><div /><div />
        </div>
      </div>
      <div className="flex h-[26px] items-center">
        <Ic className="ml-[3px] h-5 w-5">
          <path d="M2 17L14 4h42L42 17z" fill={B1} />
          <path d="M2 17h40v38H2z" fill={B2} />
          <path d="M42 17L55 4v36L42 55z" fill={B3} />
        </Ic>
        <Fit className="ml-[3px] w-[7px]">2</Fit>
      </div>
      {tree.map(([name, icon, w, plus], i) => (
        <div key={name} className="flex h-[25px] items-center">
          <div className={`ml-[10px] flex w-[11px] self-stretch border-l border-dotted border-[#888] ${i === 10 ? "h-[13px]" : ""}`}>
            <div className="mt-[12px] h-px w-[11px] border-t border-dotted border-[#888]" />
          </div>
          <div className="-ml-[16px] flex h-[10px] w-[10px] items-center justify-center">
            {plus && (
              <Ic v="0 0 16 16" className="-mt-1 h-4 w-4">
                <path d="M3 0h10v16H3zM0 3h16v10H0z" fill="#f5f5f5" />
                <path d="M8 3v10M3 8h10" stroke="#888" strokeWidth="2.400" />
              </Ic>
            )}
          </div>
          <div className="ml-2">{icon}</div>
          <Fit className={`ml-[3px] ${w}`}>{name}</Fit>
        </div>
      ))}
    </aside>
  );
}

/* ---------- graphics window ---------- */

function Part() {
  return (
    <svg viewBox="0 0 1410 1230" className="absolute top-[189px] left-[631px] h-[410px] w-[470px]" fill="none">
      <defs>
        <linearGradient id="bore" x1="0" x2="1" y1=".4" y2=".6">
          <stop offset="0" stopColor="#a0a0a0" />
          <stop offset=".3" stopColor="#555" />
          <stop offset=".6" stopColor="#0a0a0a" />
          <stop offset="1" stopColor="#222" />
        </linearGradient>
        <linearGradient id="round" x1="1120" y1="80" x2="1300" y2="270" gradientUnits="userSpaceOnUse">
          <stop offset="0" stopColor="#dcdcdc" />
          <stop offset="1" stopColor="#c6c6c6" />
        </linearGradient>
      </defs>
      <path d="M232 80L290 58 1140 71C1236 76 1316 160 1316 268L1337 1157 1274 1178z" fill="#c6c6c6" />
      <path d="M232 80L290 58 1128 71 1072 92z" fill="#dcdcdc" />
      <path d="M1072 92L1128 71C1236 74 1316 160 1316 268L1254 289C1250 180 1174 100 1072 92z" fill="url(#round)" />
      <path d="M94 1159L76 240C78 150 142 84 232 80L1072 92C1174 100 1250 180 1254 289L1274 1178z" fill="#a8a8a8" />
      <g stroke="#3a3a3a" strokeWidth="3">
        <path d="M94 1159L76 240C78 150 142 84 232 80L1072 92C1174 100 1250 180 1254 289L1274 1178z" />
        <path d="M232 80L290 58 1128 71C1236 74 1316 160 1316 268L1337 1157 1274 1178M1254 289L1316 268M1072 92L1128 71M258 79L314 59" />
      </g>
      <ellipse cx="274" cy="892" rx="57" ry="60" fill="url(#bore)" />
      <path d="M286 836C324 850 334 890 322 924C286 908 276 870 286 836z" fill="#fff" />
      <ellipse cx="274" cy="892" rx="56" ry="60" stroke="#ff0" strokeWidth="5" />
      <path d="M230 928A56 60 0 0 1 262 834" stroke="#c8c400" strokeWidth="5" />
      <ellipse cx="1083" cy="904" rx="55" ry="58" fill="url(#bore)" />
      <path d="M1100 851C1136 866 1148 902 1128 936C1094 920 1086 882 1100 851z" fill="#fff" />
      <ellipse cx="1083" cy="904" rx="55" ry="58" stroke="#3a3a3a" strokeWidth="3" />
      <path d="M638 740l38-3 38 9-38 2zM650 743h50M676 735v16M664 745h24M676 748h120" stroke="#000080" strokeWidth="3" />
      <path d="M670 740h11v10h-11z" fill="#000080" />
      <ellipse cx="676" cy="744" rx="37" ry="39" stroke="#000" strokeWidth="6" />
      <text x="799" y="765" fontSize="40" fill="#3d3d99" fontFamily="Noto Sans, sans-serif">2</text>
      <path d="M90 1154h11v9H90z" fill="#f5f000" />
    </svg>
  );
}

function ViewCube() {
  return (
    <svg viewBox="80 170 290 220" className="absolute top-[56px] left-[1617px] h-[73px] w-[97px]" fill="none">
      <defs>
        <filter id="soft" x="-20%" y="-50%" width="140%" height="200%"><feGaussianBlur stdDeviation="8" /></filter>
        <linearGradient id="face" x1="0" x2="0" y1="0" y2="1">
          <stop offset="0" stopColor="#f6f6f6" /><stop offset="1" stopColor="#e4e4e4" />
        </linearGradient>
      </defs>
      <path d="M100 358L180 342 350 334 290 366z" fill="#aaa" filter="url(#soft)" />
      <path d="M135 190L286 190 288 352 140 344z" fill="url(#face)" />
      <path d="M286 190L320 186 320 322 288 352z" fill="#e2e2e2" />
      <path d="M164 220h90v98h-88z" fill="#e0e2e5" />
      <path d="M135 190L286 190 288 352 140 344zM286 190L320 186 320 322 288 352" stroke="#8c8c8c" strokeWidth="3" strokeDasharray="26 8" />
      <text x="157" y="287" fontSize="46" fontWeight="700" fill="#979ca3" textLength="107" lengthAdjust="spacingAndGlyphs" fontFamily="Noto Sans, sans-serif">FRONT</text>
      <path d="M293 252l5 2v22l-5-2zM301 264l6-12v18l-5 4zM311 246h3" stroke="#a2a7ae" strokeWidth="3" fill="#a2a7ae" />
    </svg>
  );
}

function NavBar() {
  return (
    <div className="absolute top-[144px] left-[1695px] flex h-[232px] w-9 flex-col items-center rounded-md border-2 border-[#bdbdbd] bg-[#f4f4f4] text-[#888]">
      <Ic v="0 0 24 24" className="mt-[2px] ml-[17px] h-2 w-2">
        <circle cx="12" cy="12" r="12" fill="#aaa" />
        <path d="M7 7l10 10M17 7L7 17" stroke="#fff" strokeWidth="3" />
      </Ic>
      <Ic v="0 0 66 66" className="mt-[11px] h-[22px] w-[22px]">
        <path d="M33 2h31v31a31 31 0 1 1-31-31z" fill="#ececf0" stroke="#92959c" strokeWidth="3" />
        <circle cx="33" cy="34" r="17" fill="#f8f8f8" stroke="#92959c" strokeWidth="3" />
        <path d="M20 46l-8 8M46 46l8 8" stroke="#b5b7bc" strokeWidth="3" />
      </Ic>
      <Down className="mt-[9px] h-[3px] w-[5px]" />
      <div className="mt-[5px] h-px w-[26px] bg-[#bbb]" />
      <Ic v="0 0 66 72" className="mt-[5px] h-6 w-[22px]">
        <path d="M20 70C16 56 4 46 2 36c4-4 8 0 14 8L10 14c2-4 6-4 8 0l7 20-1-30c2-4 7-4 8 0l3 30 5-28c2-3 7-2 7 2l-2 28 8-20c3-3 7-1 7 3l-6 32c-2 8-6 12-6 19z" fill="#fafafa" stroke="#92959c" strokeWidth="3" />
      </Ic>
      <Ic v="0 0 66 72" className="mt-2 h-6 w-[22px]">
        <path d="M2 2h28l14 14v42H2z" fill="#ececf0" stroke="#92959c" strokeWidth="3" />
        <path d="M30 2v14h14" stroke="#92959c" strokeWidth="3" />
        <circle cx="41" cy="45" r="12" fill="#fff" stroke="#92959c" strokeWidth="4" />
        <path d="M50 54l14 14" stroke="#92959c" strokeWidth="8" />
      </Ic>
      <Down className="mt-[8px] h-[3px] w-[5px]" />
      <Ic v="0 0 66 66" className="mt-[9px] h-[22px] w-[22px]">
        <ellipse cx="33" cy="34" rx="10" ry="31" stroke="#92959c" strokeWidth="4" />
        <path d="M14 24C-4 30-4 40 14 44c14 4 34 2 42-4M52 26l12 8-10 8M22 34h14M33 24v18M46 8l-8 4 4 8M52 22l-6 6" stroke="#92959c" strokeWidth="4" />
      </Ic>
      <Down className="mt-[9px] h-[3px] w-[5px]" />
      <Ic v="0 0 66 72" className="mt-[8px] h-6 w-[22px]">
        <path d="M8 20L22 2l6 10L52 4v16" fill="#f5f5f5" stroke="#92959c" strokeWidth="3" />
        <path d="M2 22h63v46H2z" fill="#f0f0f2" stroke="#92959c" strokeWidth="3" />
        <path d="M12 34h43v22H12z" fill="#dcdee4" stroke="#92959c" strokeWidth="3" />
      </Ic>
      <Ic v="0 0 24 24" className="mt-[9px] ml-[17px] h-2 w-2">
        <circle cx="12" cy="12" r="12" fill="#aaa" />
        <path d="M5 12h14" stroke="#fff" strokeWidth="3" />
      </Ic>
    </div>
  );
}

function Triad() {
  return (
    <svg viewBox="220 870 70 70" className="absolute top-[689px] left-[31px] h-[70px] w-[70px]">
      <path d="M241.500 918V890" stroke="#00a000" strokeWidth="1.200" />
      <path d="M241.500 918.500h18" stroke="#a00000" strokeWidth="1.200" />
      <path d="M241 888l5.500 10h-11z" fill="#0b8a0b" />
      <path d="M240.500 888l.5 10h-4.500z" fill="#44e044" />
      <path d="M258.500 912.500l11 5.500-11 5.500z" fill="#a00000" />
      <path d="M227.500 917h5l-5 8h6" stroke="#4a4aff" fill="none" />
      <ellipse cx="235" cy="919.500" rx="5.500" ry="5.800" fill="#0000a0" />
      <text x="237" y="886" fontSize="12" fill="#30e030" fontFamily="Liberation Sans, sans-serif">Y</text>
      <text x="271.500" y="922.500" fontSize="12" fill="#ff3030" fontFamily="Liberation Sans, sans-serif">X</text>
    </svg>
  );
}

function Viewport() {
  return (
    <main className="relative h-[789px] bg-white">
      <div className="flex h-6 items-center justify-end pr-[3px]">
        <div className="mt-2 h-[2px] w-2 bg-[#444]" />
        <Ic v="0 0 12 11" className="-mt-px ml-[11px] h-[11px] w-3">
          <path d="M.7.700h10.600v9.600H.7zM6 .7v9.600M6 5.500h5" stroke="#444" strokeWidth="1.400" />
        </Ic>
        <Ic v="0 0 10 10" className="-mt-px ml-[10px] h-[10px] w-[10px]">
          <path d="M.5.5l9 9M9.500.5l-9 9" stroke="#444" strokeWidth="1.600" />
        </Ic>
      </div>
      <Part />
      <ViewCube />
      <NavBar />
      <Triad />
    </main>
  );
}

const docs: [string, string, string][] = [
  ["3.ipt", "w-[29px]", "ml-[10px]"],
  ["4.ipt", "w-[29px]", "ml-[24px]"],
  ["5(motor).ipt", "w-[79px]", "ml-[24px]"],
  ["6.ipt", "w-[29px]", "ml-[24px]"],
  ["7 (5mm rod).ipt", "w-[103px]", "ml-[23px]"],
  ["8.ipt", "w-[29px]", "ml-[24px]"],
  ["10(spring).ipt", "w-[87px]", "ml-[24px]"],
  ["11(plain rod).ipt", "w-[105px]", "ml-[25px]"],
  ["12(motor2).ipt", "w-[95px]", "ml-[24px]"],
  ["13(rod).ipt", "w-[69px]", "ml-[24px]"],
  ["Part1", "w-[34px]", "ml-[23px]"],
  ["Assembly1", "w-[71px]", "ml-[24px]"],
];

function Close() {
  return (
    <Ic v="0 0 10 10" className="ml-2 h-[10px] w-[10px]">
      <path d="M.7.700l8.600 8.600M9.300.7L.7 9.300" stroke="#888" strokeWidth="1.900" />
    </Ic>
  );
}

function DocTabs() {
  return (
    <div className="flex h-[30px] items-center bg-[#d9d9d9] text-[#666]">
      <div className="ml-[6px]"><HomeIcon /></div>
      <Fit className="ml-1 w-10">Home</Fit>
      <Fit className="ml-[20px] w-[204px]">1(Main Motor Board(z axis)).ipt</Fit>
      <Close />
      <div className="ml-[14px] flex h-full w-[65px] items-center border-b-4 border-[#38aee0] bg-[#efefef] text-[#2196d6]">
        <Fit className="ml-[10px] w-[29px]">2.ipt</Fit>
        <Close />
      </div>
      {docs.map(([name, w, ml]) => (
        <div key={name} className={`flex items-center ${ml}`}>
          <Fit className={w}>{name}</Fit>
          <Close />
        </div>
      ))}
      <div className="mr-[6px] ml-auto flex w-[18px] flex-col gap-[5px] [&>*]:h-[2px] [&>*]:bg-[#555]">
        <div /><div /><div />
      </div>
    </div>
  );
}

/* ---------- taskbar ---------- */

function Task({ className, run = true, children }: Kids & { className: string; run?: boolean }) {
  return (
    <div className={`flex h-full shrink-0 flex-col items-center justify-center ${className} ${run ? "border-b-[3px] border-[#9aeaec] pt-[3px]" : ""}`}>
      {children}
    </div>
  );
}

function Taskbar() {
  return (
    <footer className="flex h-[50px] items-center bg-linear-to-r from-[#0c2b2d] from-82% to-[#0b3c4a] to-90% text-white">
      <div className="flex h-full w-[60px] items-center justify-center bg-[#2d4e52]">
        <svg viewBox="0 0 20 20" className="h-5 w-5" fill="#fff">
          <path d="M0 3l8.500-1.200v7.700H0zM9.300 1.600L20 0v9.500H9.300zM0 10.300h8.500v7.900L0 17zM9.300 10.300H20V20L9.300 18.400z" />
        </svg>
      </div>
      <div className="flex h-full w-[430px] items-center border border-[#5f7d7e] bg-[#345859] text-[18.500px] text-[#dde8e8]">
        <svg viewBox="0 0 22 22" className="ml-[14px] h-[22px] w-[21px]" fill="none" stroke="#fff" strokeWidth="1.400">
          <circle cx="13.500" cy="8" r="6.800" />
          <path d="M8.500 13L.5 21" />
        </svg>
        <Fit className="ml-[14px] w-[164px]">Type here to search</Fit>
      </div>
      <svg viewBox="0 0 20 20" className="ml-5 h-5 w-5 shrink-0" fill="none" stroke="#fff" strokeWidth="1.300">
        <path d="M.7 0v3.500h12V0M.7 6h12v8.500H.7zM.7 20v-3h12v3M18.500 0v5M18.500 10v10" />
        <path d="M17.200 6.500h2.600v2.500h-2.600z" fill="#fff" stroke="none" />
      </svg>
      <Task className="ml-[28px] w-[51px]">
        <svg viewBox="0 0 28 24" className="h-6 w-7">
          <path d="M0 1h11l2 2h14v10H0z" fill="#e09b08" />
          <path d="M0 5h10l2-2h16v19H0z" fill="#fcc84a" />
          <path d="M5 23v-8c0-2 1-3 3-3h12c2 0 3 1 3 3v8h-4v-5H9v5z" fill="#3c96e0" />
        </svg>
      </Task>
      <Task className="ml-[11px] w-[51px]">
        <svg viewBox="0 0 30 30" className="h-[30px] w-[30px]">
          <circle cx="15" cy="15" r="15" fill="#fcc21b" />
          <path d="M15 15L2 7.500A15 15 0 0 1 28 7.500H15z" fill="#e53b2e" />
          <path d="M2 7.500A15 15 0 0 0 15 30l6.500-11.500H8.500z" fill="#249a48" />
          <circle cx="15" cy="15" r="7.500" fill="#fff" />
          <circle cx="15" cy="15" r="5.900" fill="#2f7be8" />
        </svg>
      </Task>
      <Task run={false} className="ml-[11px] w-[51px]">
        <svg viewBox="0 0 30 28" className="h-7 w-[30px]">
          <path d="M0 9L15 0l15 9v8H0z" fill="#0b5cb0" />
          <path d="M3 9h24v10H3z" fill="#f0f0f0" />
          <path d="M0 9l15 9 15-9v19H0z" fill="#1ea2ec" />
          <path d="M15 18l15-9v19z" fill="#40cdf8" />
        </svg>
      </Task>
      <Task run={false} className="ml-[11px] w-[51px]">
        <svg viewBox="0 0 26 26" className="h-[26px] w-[26px]">
          <circle cx="13" cy="13" r="13" fill="#2a9fda" />
          <path d="M5 13l14-6-2.500 13-5-3.500-2 2v-4z" fill="#fff" />
          <path d="M9.500 15l7-6-5 7z" fill="#b8d8ea" />
        </svg>
      </Task>
      <Task className="ml-[11px] w-[51px]">
        <svg viewBox="0 0 30 25" className="h-[25px] w-[30px]">
          <path d="M20 1h8q2 0 1.500 2L25 15h-5l3-9h-5z" fill="#e82820" />
          <path d="M0 1h7l6 15-2 7H9z" fill="#ff2820" />
          <path d="M8 23l7-19c1-3 3-3 6-3l-8 22z" fill="#ff6a28" />
          <rect x="18" y="13" width="11" height="12" rx="2" fill="#52c060" />
          <path d="M26.500 16H21v3h5v3h-5.500" fill="none" stroke="#fff" strokeWidth="1.500" />
        </svg>
      </Task>
      <Task className="ml-[6px] w-[61px] bg-[#12808a]">
        <svg viewBox="0 0 28 31" className="h-[31px] w-7">
          <path d="M0 3l4-2v21l-4 2z" fill="#ebcb62" />
          <path d="M3 21l25-17v26H3z" fill="#6f5500" />
          <path d="M4 1.500Q4 0 5.500 0h20v21.500H4z" fill="#dcae05" />
          <path d="M12 5h7v2.200h-2v7h2V16.500h-7v-2.300h2v-7h-2z" fill="#fff" />
          <text x="9" y="28.500" fontSize="6.500" fontWeight="700" fill="#fff" textLength="13" fontFamily="Noto Sans, sans-serif">PRO</text>
        </svg>
      </Task>
      <div className="flex h-full flex-none items-center bg-linear-to-r from-[#2c4f53] from-55% via-[#2f5558] via-75% to-[#0c2b2d]">
        <Task className="ml-[6px] w-[51px]">
          <svg viewBox="0 0 28 28" className="h-7 w-7">
            <rect width="28" height="28" rx="1.500" fill="#25a4ea" />
            <path d="M16 16l5-4 7-2v18z" fill="#7d7fd8" />
            <path d="M14 16l4-3 10 13v2H14z" fill="#3a60c8" />
            <path d="M0 17l7-6c2-1 3-1 4 0l16 17H0z" fill="#124a8c" />
            <circle cx="18.500" cy="6.500" r="2.600" fill="#fff" />
          </svg>
        </Task>
        <div className="w-[340px]" />
      </div>
      <svg viewBox="0 0 16 9" className="ml-auto h-[9px] w-4" fill="none" stroke="#fff" strokeWidth="1.400">
        <path d="M.7 8.300L8 1l7.300 7.300" />
      </svg>
      <svg viewBox="0 0 14 18" className="ml-4 h-[18px] w-[14px]" fill="none" stroke="#fff" strokeWidth="1.200">
        <rect x=".6" y="4" width="9" height="10" rx="1.500" />
        <path d="M9.600 8l3.800-2.500v7L9.600 10M1 1.500q4.500-2 9 0M1 16.500q4.500 2 9 0" />
      </svg>
      <svg viewBox="0 0 19 16" className="mt-1 ml-[13px] h-4 w-[19px]" fill="none" stroke="#fff" strokeWidth="1.300">
        <path d="M.7 1.700h15.600v9H.7zM17.500 4v4" />
        <path d="M2.500 3.500h2v5.500h-2z" fill="#fff" stroke="none" />
        <circle cx="13.500" cy="10.500" r="5.300" fill="#129a2a" stroke="none" />
        <path d="M13.500 7.500q4 3 0 6q-4-3 0-6v6" strokeWidth="1" />
      </svg>
      <svg viewBox="0 0 16 16" className="mt-px ml-[13px] h-4 w-4" fill="none" stroke="#fff" strokeWidth="1.200">
        <path d="M.7 16A15 15 0 0 1 15.500 1M4.500 16A11 11 0 0 1 15.500 5M8.500 16A7 7 0 0 1 15.500 9" />
        <circle cx="14" cy="14.500" r="1.500" fill="#fff" stroke="none" />
      </svg>
      <Fit className="ml-[14px] w-[29px]">ENG</Fit>
      <div className="ml-[16px] flex w-[75px] flex-col items-center leading-6">
        <Fit className="w-[35px]">09:46</Fit>
        <Fit className="w-[75px]">30-05-2023</Fit>
      </div>
      <svg viewBox="0 0 20 21" className="ml-[24px] h-[21px] w-5" fill="none" stroke="#fff" strokeWidth="1.400">
        <path d="M.7.700h18.600v16H13l-3 3-3-3H.7z" />
      </svg>
      <div className="mr-[6px] ml-[24px] h-full w-px bg-[#6e8e94]" />
    </footer>
  );
}

export default function App() {
  return (
    <div className="flex h-[1080px] w-[1920px] flex-col overflow-hidden bg-[#d9d9d9] font-['Noto_Sans',sans-serif] text-[15px] leading-5">
      <TitleBar />
      <MenuTabs />
      <Ribbon />
      <div className="flex h-[819px]">
        <Browser />
        <div className="flex w-[1731px] flex-col">
          <Viewport />
          <DocTabs />
        </div>
      </div>
      <div className="flex h-[30px] items-center bg-[#eee] text-[#333]">
        <Fit className="mt-px ml-px w-10">Ready</Fit>
        <div className="ml-auto flex h-[27px] w-10 border-l border-[#d0d0d0] pt-px pl-[11px]"><Fit className="w-[6px]">1</Fit></div>
        <div className="flex h-[27px] w-[39px] border-x border-[#d0d0d0] pt-px pl-[9px]"><Fit className="w-[15px]">14</Fit></div>
      </div>
      <Taskbar />
    </div>
  );
}
